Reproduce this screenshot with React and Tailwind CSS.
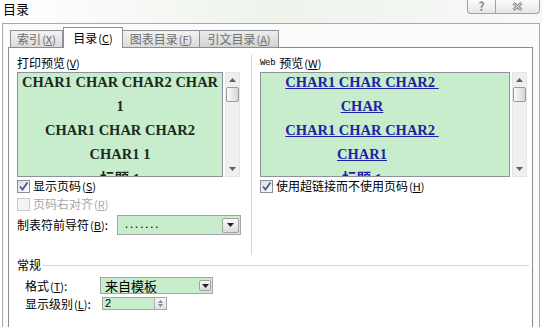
import React from 'react';

function Mn({ k }) {
  return (
    <span className="text-[11px] ml-[1px]">
      (<span className="underline">{k}</span>)
    </span>
  );
}

function Check({ checked, disabled }) {
  return (
    <span
      className={
        disabled
          ? 'w-[13px] h-[13px] shrink-0 border border-[#c9c9c9] bg-[#f4f4f4]'
          : 'w-[13px] h-[13px] shrink-0 border border-[#8e8f8f] bg-gradient-to-br from-[#d8dde6] to-white flex items-center justify-center'
      }
    >
      {checked && (
        <svg width="11" height="11" viewBox="0 0 11 11">
          <path d="M2 5.5 L4.5 8.5 L9.5 1.5" fill="none" stroke="#4a5c8e" strokeWidth="1.8" />
        </svg>
      )}
    </span>
  );
}

function ArrowBtn({ small }) {
  return (
    <span
      className={
        small
          ? 'w-[12px] h-[11px] border border-[#a3a3a3] rounded-[2px] bg-gradient-to-b from-[#fafafa] to-[#dcdcdc] flex items-center justify-center'
          : 'w-[17px] h-[15px] border border-[#a3a3a3] rounded-[2px] bg-gradient-to-b from-[#fafafa] to-[#dcdcdc] flex items-center justify-center'
      }
    >
      <svg width="7" height="4" viewBox="0 0 7 4">
        <path d="M0 0 L7 0 L3.5 4Z" fill="#222" />
      </svg>
    </span>
  );
}

function Scrollbar() {
  return (
    <div className="w-[15px] h-full flex flex-col bg-[#efefef] border border-[#e4e4e4]">
      <div className="h-[14px] flex items-center justify-center">
        <svg width="7" height="4" viewBox="0 0 7 4">
          <path d="M0 4 L3.5 0 L7 4Z" fill="#606060" />
        </svg>
      </div>
      <div className="h-[15px] border border-[#9c9c9c] rounded-[2px] bg-gradient-to-r from-[#fbfbfb] to-[#d6d6d6]" />
      <div className="flex-1" />
      <div className="h-[14px] flex items-center justify-center">
        <svg width="7" height="4" viewBox="0 0 7 4">
          <path d="M0 0 L7 0 L3.5 4Z" fill="#606060" />
        </svg>
      </div>
    </div>
  );
}

export default function App() {
  return (
    <div className="w-[543px] h-[327px] overflow-hidden bg-white text-[12px] text-black font-['Noto_Sans_CJK_SC',sans-serif]">
      {/* Title bar */}
      <div className="h-[23px] flex justify-between items-start bg-gradient-to-r from-white via-[#eef3ec] to-[#f7f9f7]">
        <span className="pl-[3px] text-[13px] leading-[18px]">目录</span>
        <div className="mr-[3px] -mt-[2px] flex h-[16px] border border-t-0 border-[#a2a2a2] rounded-b-[4px] bg-gradient-to-b from-white to-[#e6e6e6] overflow-hidden">
          <div className="w-[28px] flex items-center justify-center border-r border-[#a2a2a2] text-[12px] font-bold text-[#8a8a8a] leading-none pt-[1px]">
            ?
          </div>
          <div className="w-[43px] flex items-center justify-center pt-[1px]">
            <svg width="11" height="9" viewBox="0 0 11 9">
              <path d="M1.5 1 L9.5 8 M9.5 1 L1.5 8" stroke="#8a8a8a" strokeWidth="3" />
              <path d="M1.5 1 L9.5 8 M9.5 1 L1.5 8" stroke="#f4f4f4" strokeWidth="1" />
            </svg>
          </div>
        </div>
      </div>

      {/* Frame */}
      <div className="ml-[2px] w-[538px] h-[304px] border border-b-0 border-[#a9a9a9] bg-[#fbfbfb] flex flex-col">
        {/* Tabs */}
        <div className="h-[23px] pl-[7px] flex items-end">
          <div className="w-[53px] h-[17px] border border-b-0 border-[#8f9096] bg-gradient-to-b from-[#f3f3f3] to-[#dadada] flex items-center justify-center text-[#6e6e6e]">
            索引<Mn k="X" />
          </div>
          <div className="w-[60px] h-[21px] -mb-px relative z-10 border border-b-0 border-[#8f9096] bg-white flex items-center justify-center">
            目录<Mn k="C" />
          </div>
          <div className="w-[77px] h-[17px] border border-b-0 border-l-0 border-[#8f9096] bg-gradient-to-b from-[#f3f3f3] to-[#dadada] flex items-center justify-center text-[#6e6e6e]">
            图表目录<Mn k="F" />
          </div>
          <div className="w-[79px] h-[17px] border border-b-0 border-l-0 border-[#8f9096] bg-gradient-to-b from-[#ededed] to-[#d2d2d2] flex items-center justify-center text-[#6e6e6e]">
            引文目录<Mn k="A" />
          </div>
        </div>

        {/* Tab page */}
        <div className="ml-[5px] w-[525px] flex-1 border border-b-0 border-[#898c95] bg-white pt-[7px] pl-[8px]">
          <div className="h-[200px] flex">
            {/* Print preview column */}
            <div className="w-[224px] flex flex-col">
              <div className="h-[16px] leading-[16px]">
                打印预览<Mn k="V" />
              </div>
              <div className="mt-[1px] h-[105px] flex">
                <div className="w-[206px] h-full border border-[#8d9199] bg-[#c7edcc] overflow-hidden">
                  <div className="-mt-[3px] text-center font-bold text-[14.5px] leading-[24px] text-[#1b2a1c] font-['Liberation_Serif','Noto_Sans_CJK_SC',serif]">
                    <div>CHAR1 CHAR CHAR2 CHAR</div>
                    <div>1</div>
                    <div>CHAR1 CHAR CHAR2</div>
                    <div>CHAR1 1</div>
                    <div className="mt-[1px]">标题 1</div>
                  </div>
                </div>
                <div className="ml-[2px] h-full">
                  <Scrollbar />
                </div>
              </div>
              <div className="h-[18px] flex items-center gap-[3px]">
                <Check checked />
                <span>
                  显示页码<Mn k="S" />
                </span>
              </div>
              <div className="h-[18px] flex items-center gap-[3px] text-[#a8a8a8]">
                <Check disabled />
                <span>
                  页码右对齐<Mn k="R" />
                </span>
              </div>
              <div className="mt-[2px] h-[20px] flex items-center">
                <span className="w-[100px]">
                  制表符前导符<Mn k="B" />:
                </span>
                <div className="w-[124px] h-[20px] border border-[#a5a5a5] bg-[#c7edcc] flex items-center justify-between pl-[7px] pr-[1px]">
                  <span className="text-[11px] leading-none tracking-[2px] -mt-[3px]">.......</span>
                  <ArrowBtn />
                </div>
              </div>
            </div>

            {/* Divider */}
            <div className="ml-[10px] w-px h-full bg-[#d6d6d6]" />

            {/* Web preview column */}
            <div className="ml-[8px] w-[267px] flex flex-col">
              <div className="h-[16px] leading-[16px] flex items-center">
                <span className="text-[9px] font-['Liberation_Mono',monospace] mr-[4px] tracking-[-0.3px]">Web</span>
                预览<Mn k="W" />
              </div>
              <div className="mt-[1px] h-[105px] flex">
                <div className="w-[250px] h-full border border-[#8d9199] bg-[#c7edcc] overflow-hidden">
                  <div className="w-[202px] -mt-[3px] text-center font-bold text-[14.5px] leading-[24px] text-[#1f22a6] font-['Liberation_Serif','Noto_Sans_CJK_SC',serif]">
                    <div><span className="underline">CHAR1 CHAR CHAR2&nbsp;</span></div>
                    <div><span className="underline">CHAR</span></div>
                    <div><span className="underline">CHAR1 CHAR CHAR2&nbsp;</span></div>
                    <div><span className="underline">CHAR1</span></div>
                    <div className="mt-[1px]"><span className="underline">标题 1</span></div>
                  </div>
                </div>
                <div className="ml-[2px] h-full">
                  <Scrollbar />
                </div>
              </div>
              <div className="h-[18px] flex items-center gap-[3px]">
                <Check checked />
                <span>
                  使用超链接而不使用页码<Mn k="H" />
                </span>
              </div>
            </div>
          </div>

          {/* General */}
          <div className="mt-[2px] h-[16px] flex items-center pr-[3px]">
            <span>常规</span>
            <div className="ml-[2px] flex-1 h-px bg-[#d6d6d6]" />
          </div>
          <div className="mt-[4px] h-[17px] flex items-center pl-[8px]">
            <span className="w-[75px]">
              格式<Mn k="T" />:
            </span>
            <div className="w-[113px] h-[17px] border border-[#a5a5a5] bg-[#c7edcc] flex items-center justify-between pl-[4px] pr-[1px]">
              <span className="text-[13px] leading-none">来自模板</span>
              <ArrowBtn small />
            </div>
          </div>
          <div className="mt-[3px] h-[13px] flex items-center pl-[8px]">
            <span className="w-[77px]">
              显示级别<Mn k="L" />:
            </span>
            <div className="w-[65px] h-[13px] border border-[#a5a5a5] bg-[#c7edcc] flex items-center justify-between pl-[2px]">
              <span className="text-[11px] leading-none font-['Liberation_Sans',sans-serif]">2</span>
              <div className="w-[12px] h-full border-l border-[#b5b5b5] bg-gradient-to-b from-[#f7f7f7] to-[#e0e0e0] flex flex-col items-center justify-center gap-[1px]">
                <svg width="5" height="3" viewBox="0 0 5 3">
                  <path d="M0 3 L2.5 0 L5 3Z" fill="#7a8aa8" />
                </svg>
                <svg width="5" height="3" viewBox="0 0 5 3">
                  <path d="M0 0 L5 0 L2.5 3Z" fill="#7a8aa8" />
                </svg>
              </div>
            </div>
          </div>
        </div>
      </div>
    </div>
  );
}
